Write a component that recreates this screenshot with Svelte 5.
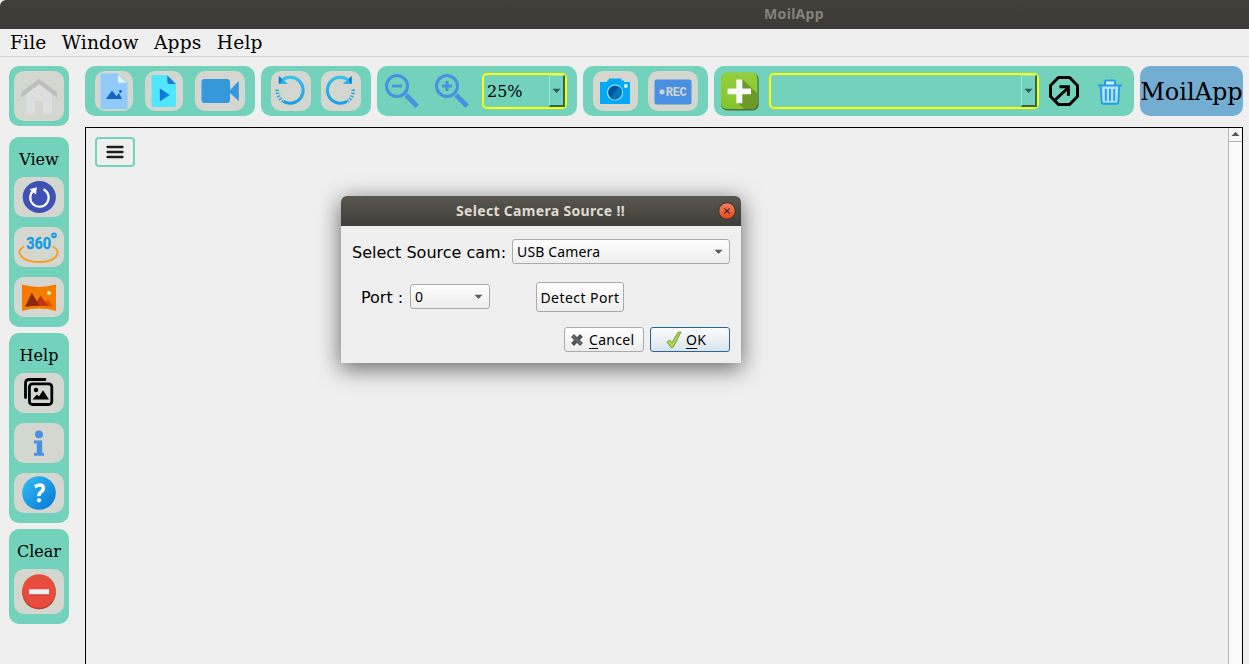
<script>
  const menus = ['File', 'Window', 'Apps', 'Help'];
  let zoom = $state('25%');
</script>

{#snippet arrow()}
  <svg width="9" height="6" viewBox="0 0 9 6"><path d="M.5 .8h8L4.500 5z" fill="currentColor" /></svg>
{/snippet}

<div class="app">
  <header class="titlebar"><span>MoilApp</span></header>
  <nav class="menubar">
    {#each menus as m}<span>{m}</span>{/each}
  </nav>

  <div class="main">
    <aside>
      <section class="panel home">
        <button class="tile" aria-label="Home">
          <svg width="50" height="50" viewBox="0 0 50 50">
            <path d="M12 22 25 12l13 10v21H29V31q0-1-1-1h-6q-1 0-1 1v12h-9z" fill="#dedede" />
            <path d="M7.200 21.500 25 7.700l18 13.800v5L25 13.200 7.200 26.500z" fill="#bdbdbd" />
          </svg>
        </button>
      </section>

      <section class="panel">
        <h2>View</h2>
        <button class="tile" aria-label="Reset view">
          <svg width="50" height="40" viewBox="0 0 50 40">
            <ellipse cx="25.300" cy="20" rx="16.600" ry="16" fill="#3f51b5" />
            <path d="M29.500 12.300a9.200 9.200 0 1 1-9.700 1" fill="none" stroke="#fff" stroke-width="2.200" />
            <path d="M15.500 12.300 22.800 10.200 22 17.500z" fill="#fff" />
          </svg>
        </button>
        <button class="tile" aria-label="Panorama 360">
          <svg width="50" height="40" viewBox="0 0 50 40">
            <path d="M10 19.500C0 25 8 35 25 35s24-10 14-15.500" fill="none" stroke="#f99d1c" stroke-width="1.800" />
            <text x="12.200" y="22.300" textLength="25" lengthAdjust="spacingAndGlyphs" class="deg">360</text>
            <circle cx="40" cy="8.300" r="1.900" fill="none" stroke="#149be0" stroke-width="1.900" />
          </svg>
        </button>
        <button class="tile" aria-label="Panorama">
          <svg width="50" height="40" viewBox="0 0 50 40">
            <path d="M8 7.500q17 4.800 34 0V34q-17-4.800-34 0z" fill="#f57c00" />
            <path d="m26 29 8-6.500 5 7.500q-6-1.500-13-1z" fill="#e65100" />
            <path d="m20 29 6.500-10.500 8 10.700q-8-1-14.500-.2z" fill="#bf360c" />
            <path d="m11 30 6.700-14.300L25.500 28.800q-7 0-14.500 1.200z" fill="#8a2a08" />
            <circle cx="35" cy="16" r="2" fill="#fff3a8" />
          </svg>
        </button>
      </section>

      <section class="panel">
        <h2>Help</h2>
        <button class="tile" aria-label="Gallery">
          <svg width="50" height="40" viewBox="0 0 50 40">
            <path d="M11.500 24.500V10.500q0-4 4-4h15.500" fill="none" stroke="#000" stroke-width="2.800" stroke-linecap="round" />
            <rect x="15.400" y="10.900" width="22.400" height="20.600" rx="3" fill="none" stroke="#000" stroke-width="2.800" />
            <circle cx="22" cy="17" r="2.200" />
            <path d="m18.500 26.500 4.500-5 2 2 4-6.200 6 9.200z" />
          </svg>
        </button>
        <button class="tile" aria-label="Information">
          <svg width="50" height="40" viewBox="0 0 50 40">
            <ellipse cx="25" cy="11.400" rx="4" ry="3.800" fill="#4a90e2" />
            <path d="M20 17.500h8.200V30H30v2.700H20V30h2.800v-9.600H20z" fill="#4a90e2" />
          </svg>
        </button>
        <button class="tile" aria-label="Help">
          <svg width="50" height="40" viewBox="0 0 50 40">
            <defs><linearGradient id="q" x1="0" y1="0" x2="1" y2="1"><stop stop-color="#32bff5" /><stop offset="1" stop-color="#0575d6" /></linearGradient></defs>
            <circle cx="25" cy="20" r="16.800" fill="url(#q)" />
            <path d="M20.800 13.600q7.700-3.600 8.500 1.200.3 2.400-2.200 4.100-2.300 1.500-2.100 4.300" fill="none" stroke="#fff" stroke-width="3.500" />
            <circle cx="25" cy="27.300" r="2.100" fill="#fff" />
          </svg>
        </button>
      </section>

      <section class="panel">
        <h2>Clear</h2>
        <button class="tile tall" aria-label="Clear">
          <svg width="50" height="45" viewBox="0 0 50 45">
            <circle cx="25" cy="23.500" r="16.800" fill="#c0392b" />
            <circle cx="25" cy="22" r="16.800" fill="#e74c3c" />
            <path d="M15 21h20v5.500H15z" fill="#c0392b" /><path d="M15 20.300h20v5H15z" fill="#ecf0f1" />
          </svg>
        </button>
      </section>
    </aside>

    <div class="content">
      <div class="toolbar">
        <section class="group files">
          <button class="tile" aria-label="Open image">
            <svg width="38" height="40" viewBox="0 0 38 40">
              <path d="M5.500 2.500H23l9.500 9V38h-27z" fill="#90caf9" /><path d="M23 3.500v8.300h8.500z" fill="#e1f5fe" />
              <path d="m11 28 6-8.500 4.600 5.700L24 22l3 6z" fill="#1565c0" /><circle cx="25.500" cy="20.500" r="1.400" fill="#1565c0" />
            </svg>
          </button>
          <button class="tile" aria-label="Open video">
            <svg width="38" height="40" viewBox="0 0 38 40">
              <defs><linearGradient id="p" x2="1" y2="1"><stop stop-color="#1565d0" /><stop offset="1" stop-color="#0d95ef" /></linearGradient></defs>
              <path d="M8 4h14.500l8.500 8.500V34q0 2-2 2H8.500Q6.500 36 6.500 34V5.500Q6.500 4 8 4z" fill="#50e6ff" />
              <path d="M22.300 4.500v6.500q0 2 2 2h6.500z" fill="#2478d3" /><path d="m14.800 17.500 10 6.500-10 6.500z" fill="url(#p)" />
            </svg>
          </button>
          <button class="tile wide" aria-label="Open camera">
            <svg width="50" height="40" viewBox="0 0 50 40"><rect x="6.500" y="8" width="28.500" height="24" rx="3" fill="#3498db" /><path d="m34.500 19.500 9.300-9.500v20l-9.300-8.500z" fill="#3498db" /></svg>
          </button>
        </section>

        <section class="group rotate">
          {#each [false, true] as right}
            <button class="tile" aria-label={right ? 'Rotate right' : 'Rotate left'}>
              <svg width="40" height="40" viewBox="0 0 40 40">
                <defs><linearGradient id="r" x2="0" y2="1"><stop stop-color="#35c0ee" /><stop offset="1" stop-color="#1c9ee4" /></linearGradient></defs>
                <g transform={right ? 'translate(38.500 0) scale(-1 1)' : undefined}>
                  <path d="M10.800 9.300A13 13 0 1 1 12.500 30.400" fill="none" stroke="url(#r)" stroke-width="3" />
                  <path d="M6.300 18.500A13.300 13.300 0 0 0 11.800 30.300" fill="none" stroke="#27a5e6" stroke-dasharray="1.500 1.600" stroke-width="3.500" />
                  <path d="M7.800 5v8h9.200z" fill="#2ab0ea" /><path d="M7.800 5v8l2.700-2.500V7.500z" fill="#1578c4" />
                </g>
              </svg>
            </button>
          {/each}
        </section>

        <section class="group zooms">
          {#each [false, true] as plus}
            <button class="plain" aria-label={plus ? 'Zoom in' : 'Zoom out'}>
              <svg width="34" height="34" viewBox="0 0 34 34" fill="none" stroke="#4a90e2">
                <circle cx="12" cy="12" r="10.500" stroke-width="3" /><path d="M7 12h10" stroke-width="3" />
                {#if plus}<path d="M12 7v10" stroke-width="3" />{/if}
                <path d="m21 21 11.200 11.200" stroke-width="4.800" />
              </svg>
            </button>
          {/each}
          <div class="combo small"><span>{zoom}</span><i>{@render arrow()}</i></div>
        </section>

        <section class="group capture">
          <button class="tile cam" aria-label="Screenshot">
            <svg width="45" height="40" viewBox="0 0 45 40">
              <path d="M7 11h7V9.500h1.700V7.500h12.600v2H31V11h6v22H7z" fill="#03a9f4" />
              <circle cx="22" cy="21.500" r="7.500" fill="#01579b" stroke="#b3e5fc" stroke-width="1.200" />
              <path d="M22 21.500 26 15.500a7 7 0 0 1-8.500 11.700z" fill="#0277bd" /><circle cx="32.800" cy="15" r="1.900" fill="#e1f5fe" />
            </svg>
          </button>
          <button class="tile wide" aria-label="Record">
            <svg width="50" height="40" viewBox="0 0 50 40">
              <rect x="6.500" y="8.500" width="37" height="25" rx="2.500" fill="#4a90e2" />
              <circle cx="14" cy="20.800" r="2.600" fill="#cbd2d7" /><text x="17.800" y="25" textLength="21" class="rec">REC</text>
            </svg>
          </button>
        </section>

        <section class="group plugins">
          <button class="plain" aria-label="Add plugin">
            <svg width="40" height="40" viewBox="0 0 40 40">
              <defs><linearGradient id="g" x2="0" y2="1"><stop stop-color="#94cf3b" /><stop offset="1" stop-color="#83c52c" /></linearGradient></defs>
              <rect x="1.200" y="2" width="37.500" height="37.500" rx="6" fill="#4d6d3f" /><rect x="1" y="1.500" width="36.500" height="36.500" rx="6" fill="url(#g)" />
              <path d="m22.500 8.500 15 14v9.500q0 6-6 6h-7l-8-7 5-8H7.500l10-6z" fill="#6b9a2a" />
              <path d="M16.300 8.500h6v9H31v5.800h-8.700v9h-6v-9H7.500v-5.800h8.800z" fill="#f8f8f8" />
            </svg>
          </button>
          <div class="combo big"><span></span><i>{@render arrow()}</i></div>
          <button class="plain launch" aria-label="Open plugin">
            <svg width="30" height="30" viewBox="0 0 30 30" fill="none" stroke="#000" stroke-width="3"><path d="M9.500 1.500h11l8 8v11l-8 8h-11l-8-8v-11zM6 24 19.500 11.500M10.500 10.800h8.900v8.900" /></svg>
          </button>
          <button class="plain trash" aria-label="Delete plugin">
            <svg width="26" height="26" viewBox="0 0 26 26">
              <path d="M4 7h18l-1.300 16.500H5.300z" fill="#b4e2f8" /><path d="M9 2h8v4H9z" fill="#d9f2ff" />
              <path d="M1 6.500h24M8 6V2.800q0-1.300 1.300-1.300h7.400q1.300 0 1.300 1.300V6M3.800 7l.8 16q.1 1.700 1.500 1.700h13.800q1.400 0 1.500-1.700l.8-16M8.800 10v12M13 10v12M17.200 10v12" fill="none" stroke="#229de8" stroke-width="1.900" />
            </svg>
          </button>
        </section>

        <section class="brand">MoilApp</section>
      </div>

      <div class="canvas">
        <div class="view">
          <button class="burger" aria-label="Toggle menu"><svg width="36" height="26" viewBox="0 0 36 26"><path d="M10.500 8h15M10.500 13h15M10.500 18h15" stroke="#1c1c1c" stroke-width="2.300" stroke-linecap="round" /></svg></button>
        </div>
        <div class="scroll"><div><svg width="9" height="6" viewBox="0 0 9 6"><path d="M.5 5h8L4.500 .8z" fill="#5a5a5a" /></svg></div></div>
      </div>
    </div>
  </div>

  <div class="dialog">
    <header>
      <span>Select Camera Source !!</span>
      <svg class="close" width="18" height="18" viewBox="0 0 18 18">
        <defs><linearGradient id="c" x2="0" y2="1"><stop stop-color="#f58263" /><stop offset="1" stop-color="#e3471b" /></linearGradient></defs>
        <circle cx="9" cy="9" r="8.300" fill="url(#c)" stroke="#33322d" /><path d="m6.300 6.300 5.400 5.400m0-5.400-5.400 5.400" stroke="#46251a" stroke-width="1.200" />
      </svg>
    </header>
    <div class="row source">
      <label for="src">Select Source cam:</label>
      <div class="select" id="src"><span>USB Camera</span>{@render arrow()}</div>
    </div>
    <div class="row port">
      <label for="port">Port :</label>
      <div class="select" id="port"><span>0</span>{@render arrow()}</div>
      <button class="btn detect"><span>Detect Port</span></button>
    </div>
    <div class="row actions">
      <button class="btn"><svg width="14" height="14" viewBox="0 0 14 14"><path d="m2.500 2.500 9 9m0-9-9 9" stroke="#505254" stroke-width="4" /><path d="m3 3 8 8" stroke="#737577" stroke-width="1.500" /></svg><span><u>C</u>ancel</span></button>
      <button class="btn ok"><svg width="16" height="18" viewBox="0 0 16 18"><path d="M1 11.200 3.500 9 6 11.800 12 1.400 15 1 7.300 16 5.300 16.500z" fill="#b5d94c" stroke="#6f9a2c" /></svg><span><u>O</u>K</span></button>
    </div>
  </div>
</div>

<style>
  :global(body) { margin: 0; overflow: hidden; }
  * { box-sizing: border-box; }
  button { padding: 0; border: 0; background: none; color: inherit; font: inherit; display: block; flex: none; }
  svg { display: block; flex: none; }
  .app { height: 664px; width: 1249px; display: flex; flex-direction: column; background: #efefef; color: #000; font-family: "DejaVu Serif", serif; overflow: hidden; position: relative; }
  .titlebar { height: 29px; flex: none; background: linear-gradient(#403f3a, #3c3b37); color: #85827b; text-align: center; font: bold 14px/28px "Noto Sans", sans-serif; letter-spacing: .3px; border-radius: 6px 0 0 0; padding-left: 339px; }
  .menubar { height: 28px; flex: none; display: flex; gap: 15.300px; padding-left: 10px; font-size: 18.670px; letter-spacing: .15px; line-height: 28px; border-bottom: 1px solid #d3d3d3; }
  .main { flex: 1; display: flex; gap: 16px; padding: 9px 6px 0 9px; min-height: 0; }
  aside { width: 60px; flex: none; display: flex; flex-direction: column; gap: 6px; }
  .panel { background: #73d2bc; border-radius: 10px; padding: 5px 5px 10px; display: flex; flex-direction: column; gap: 10px; }
  .home { height: 60px; margin-bottom: 5px; }
  .home .tile { height: 50px; }
  h2 { margin: 0 -5px -10px; height: 35px; font-size: 16px; font-weight: 400; line-height: 36px; text-align: center; }
  .tile { background: #d3d7cf; border-radius: 10px; height: 40px; }
  .tall { height: 45px; }
  .deg { font: bold 17px "Roboto", sans-serif; fill: #149be0; stroke: #149be0; stroke-width: .3px; }
  .rec { font: bold 12px "Liberation Mono", monospace; fill: #d3d7cf; }
  .content { flex: 1; display: flex; flex-direction: column; gap: 11px; min-width: 0; }
  .toolbar { display: flex; gap: 6px; height: 50px; flex: none; }
  .group { background: #73d2bc; border-radius: 10px; display: flex; align-items: center; flex: none; }
  .files { width: 170px; padding: 0 10px; gap: 12px; }
  .rotate { width: 110px; padding: 0 10px; gap: 10px; }
  .zooms { width: 200px; padding-left: 8px; gap: 16px; }
  .capture { width: 125px; padding: 0 10px; gap: 10px; }
  .plugins { width: 420px; padding-left: 6px; }
  .combo { height: 36px; border: 2px solid #ff0; border-radius: 5px; display: flex; justify-content: space-between; font-size: 16px; line-height: 34px; padding-left: 3px; }
  .small { width: 85px; margin-left: -3px; }
  .big { width: 270px; margin-left: 9px; }
  .combo i { width: 16px; height: 32px; border: solid; border-width: 1px 2px 2px 1px; border-color: #8eeedb #316457 #316457 #8eeedb; color: #315b51; display: flex; align-items: center; justify-content: center; }
  .launch { margin-left: 10px; }
  .trash { margin-left: 18px; margin-top: 2px; }
  .brand { width: 103px; height: 50px; background: #73aed2; border-radius: 10px; font-size: 24px; line-height: 52px; text-align: center; white-space: nowrap; flex: none; }
  .canvas { flex: 1; border: 1px solid #000; border-bottom: 0; display: flex; }
  .view { flex: 1; padding: 9px; }
  .burger { width: 40px; height: 30px; border: 2px solid #73d2bc; border-radius: 4px; }
  .scroll { width: 14px; border-left: 1px solid #b5b5b5; background: #fafafa; }
  .scroll div { height: 14px; padding-bottom: 1px; border-bottom: 1px solid #b5b5b5; display: flex; justify-content: center; align-items: center; background: #f7f7f7; }
  .dialog { position: absolute; left: 341px; top: 196px; width: 400px; height: 167px; background: #efefef; border-radius: 6px 6px 0 0; box-shadow: 0 5px 22px 1px rgba(0, 0, 0, .55); font-family: "DejaVu Sans", sans-serif; }
  .dialog header { height: 30px; border-radius: 6px 6px 0 0; background: linear-gradient(#59574e, #3e3d38); display: flex; align-items: center; justify-content: flex-end; padding-right: 5px; color: #dfdbd2; font: bold 14px "Noto Sans", sans-serif; }
  .dialog header span { width: 170px; margin: -1px 92px 0 0; white-space: nowrap; letter-spacing: .32px; }
  .row { display: flex; font-size: 16px; }
  .row label { white-space: nowrap; line-height: 27px; height: 25px; }
  .source { padding: 13px 11px 0; justify-content: space-between; }
  .select, .btn { border: 1px solid #aaa; border-radius: 3px; background: linear-gradient(#fefefe, #ededed); font: 14px "Noto Sans", sans-serif; letter-spacing: .15px; display: flex; align-items: center; height: 25px; white-space: nowrap; }
  .select { justify-content: space-between; padding: 0 6px 0 4px; color: #000; }
  .select :global(svg) { color: #5a5a5a; }
  .source .select { width: 218px; }
  .port { padding: 18px 0 0 20px; }
  .port .select { width: 80px; margin: 2px 46px 0 auto; }
  .port label { margin-top: 2px; }
  .detect { width: 88px; height: 30px; margin-right: 117px; justify-content: center; letter-spacing: .45px; }
  .actions { padding: 15px 11px 0; gap: 6px; justify-content: flex-end; }
  .actions .btn { width: 80px; padding-left: 5px; gap: 5px; letter-spacing: .3px; }
  .actions .ok { border-color: #24689b; background: linear-gradient(#fafcfd, #dbe4eb); padding-left: 15px; gap: 4px; }
  u { text-underline-offset: 3px; text-decoration-thickness: 1px; }
</style>
